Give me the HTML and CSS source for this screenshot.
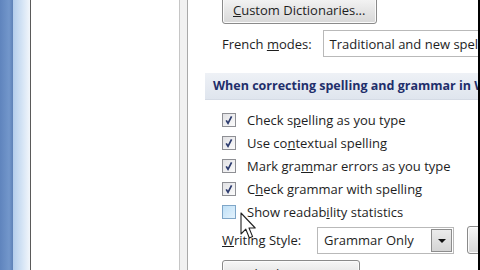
FILE: index.html
```html
<!DOCTYPE html>
<html lang="en">
<head>
    <meta charset="UTF-8">
    <title>Word Options - Proofing</title>
    <link rel="stylesheet" href="styles.css">
</head>
<body>
    <div class="screen">
        <!-- window frame on the left -->
        <div class="frame">
            <div class="frame-dark"></div>
            <div class="frame-light"></div>
            <div class="frame-edge"></div>
        </div>

        <!-- category list (empty area) -->
        <div class="category-pane"></div>
        <div class="splitter"></div>

        <!-- proofing options -->
        <div class="options">
            <div class="row first-row">
                <button class="btn btn-dict"><u>C</u>ustom Dictionaries...</button>
            </div>

            <div class="row field-row">
                <span class="label">French <u>m</u>odes:</span>
                <div class="select select-wide">Traditional and new spellings</div>
            </div>

            <div class="section-head">When correcting spelling and grammar in Word</div>

            <div class="checks">
                <label class="check"><span class="box"><svg class="tick" viewBox="0 0 12 12"><path d="M3.2 6.4 L5 9.3 L8.6 2.4" fill="none" stroke="#2c3b6e" stroke-width="1.7"/></svg></span>Check s<u>p</u>elling as you type</label>
                <label class="check"><span class="box"><svg class="tick" viewBox="0 0 12 12"><path d="M3.2 6.4 L5 9.3 L8.6 2.4" fill="none" stroke="#2c3b6e" stroke-width="1.7"/></svg></span>Use co<u>n</u>textual spelling</label>
                <label class="check"><span class="box"><svg class="tick" viewBox="0 0 12 12"><path d="M3.2 6.4 L5 9.3 L8.6 2.4" fill="none" stroke="#2c3b6e" stroke-width="1.7"/></svg></span>Mark gra<u>m</u>mar errors as you type</label>
                <label class="check"><span class="box"><svg class="tick" viewBox="0 0 12 12"><path d="M3.2 6.4 L5 9.3 L8.6 2.4" fill="none" stroke="#2c3b6e" stroke-width="1.7"/></svg></span>C<u>h</u>eck grammar with spelling</label>
                <label class="check"><span class="box hover"></span>Show readab<u>i</u>lity statistics</label>
            </div>

            <div class="row style-row">
                <span class="label label-style"><u>W</u>riting Style:</span>
                <div class="select select-style">
                    <span class="select-text">Grammar Only</span>
                    <span class="arrow"></span>
                </div>
                <button class="btn btn-settings">Settings...</button>
            </div>

            <div class="row">
                <button class="btn btn-recheck">Rechec<u>k</u> Document</button>
            </div>
        </div>

        <div class="edge-right"></div>

        <!-- mouse pointer -->
        <svg class="cursor" width="17" height="28" viewBox="0 0 17 28">
            <path d="M1 1 L1 22 L5.8 17.2 L9.4 26 L12.6 24.6 L9 16 L15.2 16 Z" fill="#fff" stroke="#222" stroke-width="1.1" stroke-linejoin="round"/>
        </svg>
    </div>
</body>
</html>
```

FILE: styles.css
```css
/* General */
html, body {
    margin: 0;
    padding: 0;
}

body {
    width: 480px;
    height: 270px;
    overflow: hidden;
    background: #fff;
    font-family: "Open Sans", "Noto Sans", sans-serif;
    font-size: 13px;
    color: #1e1e1e;
}

.screen {
    position: relative;
    display: flex;
    height: 270px;
}

/* Window frame */
.frame {
    display: flex;
    width: 31px;
    flex-shrink: 0;
}

.frame-dark {
    width: 13px;
    background: linear-gradient(to right, #5f84bd, #7397cb 70%, #5d80b6);
}

.frame-light {
    width: 17px;
    background: linear-gradient(to right, #b4cdeb, #d2e2f4 50%, #f2f6fb);
}

.frame-edge {
    width: 1px;
    background: #5a5a5a;
}

/* Left list + splitter */
.category-pane {
    width: 148px;
    flex-shrink: 0;
    background: #fff;
}

.splitter {
    width: 9px;
    flex-shrink: 0;
    background: #f1f1f1;
    border-left: 1px solid #c6c6c6;
    border-right: 1px solid #a9a9a9;
    box-sizing: border-box;
}

.edge-right {
    width: 2px;
    flex-shrink: 0;
    background: #000;
}

/* Options pane */
.options {
    flex: 1;
    min-width: 0;
    display: flex;
    flex-direction: column;
    overflow: hidden;
    white-space: nowrap;
}

.row {
    display: flex;
    align-items: center;
    padding-left: 34px;
}

.first-row {
    margin-top: -4px;
}

.btn {
    font-family: inherit;
    font-size: 13px;
    color: #1e1e1e;
    height: 28px;
    padding: 0 10px;
    border: 1px solid #8a8a8a;
    border-radius: 3px;
    background: linear-gradient(to bottom, #f6f6f6, #e6e6e6 50%, #d8d8d8);
    box-shadow: inset 0 0 0 1px #fbfbfb;
    flex-shrink: 0;
}

.btn-dict {
    width: 155px;
    text-align: left;
}

.label {
    flex-shrink: 0;
}

.field-row {
    margin-top: 6px;
}

.select {
    height: 27px;
    box-sizing: border-box;
    border: 1px solid #b9b9b9;
    background: #fff;
    display: flex;
    align-items: center;
    padding-left: 6px;
    flex-shrink: 0;
}

.select-wide {
    margin-left: 11px;
    flex: 1;
    border-right: none;
    overflow: hidden;
}

/* Section heading band */
.section-head {
    margin: 16px 0 0 17px;
    height: 26px;
    line-height: 26px;
    padding-left: 8px;
    background: linear-gradient(to bottom, #eef1f6, #dfe5ee);
    border-bottom: 1px solid #d5dbe5;
    font-size: 12.5px;
    font-weight: bold;
    color: #1f2f6b;
}

/* Checkboxes */
.checks {
    display: flex;
    flex-direction: column;
    gap: 9px;
    margin-top: 13px;
    padding-left: 34px;
}

.check {
    display: flex;
    align-items: center;
    height: 14px;
}

.box {
    width: 12px;
    height: 12px;
    margin-right: 11px;
    border: 1px solid #8e8f94;
    background: linear-gradient(to bottom right, #e1e1e4, #fbfbfb);
    flex-shrink: 0;
    display: flex;
}

.tick {
    width: 12px;
    height: 12px;
}

.box.hover {
    border-color: #7fa6c8;
    background: linear-gradient(to bottom right, #bfe0f7, #e3f2fc);
}

/* Writing style */
.style-row {
    margin-top: 7px;
}

.label-style {
    width: 95px;
}

.select-style {
    width: 137px;
    justify-content: space-between;
}

.arrow {
    width: 21px;
    height: 23px;
    margin-right: 1px;
    box-sizing: border-box;
    border: 1px solid #8d8d8d;
    background: linear-gradient(to bottom, #ececec, #d4d4d4);
    position: relative;
}

.arrow::after {
    content: "";
    position: absolute;
    left: 6px;
    top: 9px;
    border-left: 4px solid transparent;
    border-right: 4px solid transparent;
    border-top: 4px solid #111;
}

.btn-settings {
    margin-left: 13px;
    width: 70px;
    text-align: left;
    color: transparent;
}

.btn-recheck {
    margin-top: 6px;
    width: 138px;
}

/* Mouse pointer */
.cursor {
    position: absolute;
    left: 240px;
    top: 212px;
}
```
